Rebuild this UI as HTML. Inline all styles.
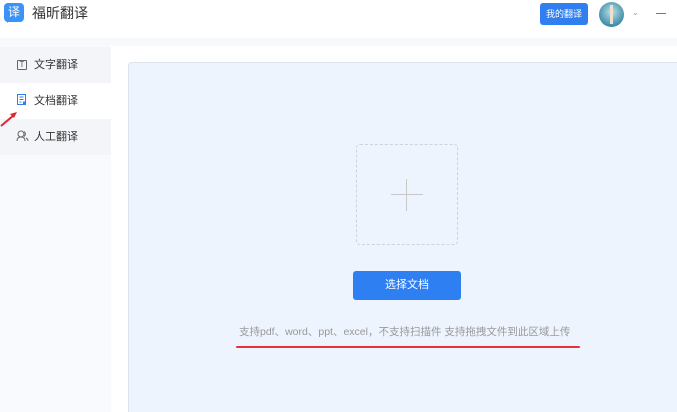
<!DOCTYPE html>
<html><head><meta charset="utf-8"><style>
*{margin:0;padding:0;box-sizing:border-box}
html,body{width:677px;height:412px;overflow:hidden}
body{background:#fff;font-family:"Liberation Sans","Noto Sans CJK SC",sans-serif;position:relative}
.hdr{position:absolute;left:0;top:0;width:677px;height:38px;background:#fff}
.strip{position:absolute;left:0;top:38px;width:677px;height:8px;background:#f7f9fc}
.side{position:absolute;left:0;top:46px;width:111px;height:366px;background:#f8fafe}
.item{position:absolute;left:0;width:111px;height:36px;font-size:11px;color:#333;line-height:36px;padding-left:34px}
.card{position:absolute;left:128px;top:62px;width:549px;height:350px;background:#edf4fe;border:1px solid #dde3ea;border-right:none;border-bottom:none;border-radius:4px 0 0 0}
</style></head><body>
<div class="hdr">
 <div style="position:absolute;left:4px;top:3px;width:20px;height:19px;background:#3b93f7;border-radius:4px;color:#fff;font-size:12px;line-height:19px;text-align:center">译</div>
 <div style="position:absolute;left:7px;top:19px;width:0;height:0;border-left:4px solid #3b93f7;border-bottom:4px solid transparent"></div>
 <div style="position:absolute;left:32px;top:3px;font-size:14px;color:#333;line-height:20px">福昕翻译</div>
 <div style="position:absolute;left:540px;top:3px;width:48px;height:22px;background:#2f7ff0;border-radius:3px;color:#fff;font-size:9px;line-height:22px;text-align:center">我的翻译</div>
 <div style="position:absolute;left:599px;top:2px;width:25px;height:25px;border-radius:50%;background:radial-gradient(circle at 50% 40%,#bfe0e8,#3f8ea8 70%,#2a6a80)"></div>
 <div style="position:absolute;left:610px;top:5px;width:3px;height:19px;background:#e8e2cf"></div>
 <div style="position:absolute;left:632px;top:8px;font-size:8px;color:#999">⌄</div>
 <div style="position:absolute;left:656px;top:13px;width:10px;height:1px;background:#777"></div>
</div>
<div class="strip"></div>
<div class="side">
 <div class="item" style="top:1px;background:#f4f5f8">文字翻译</div>
 <div class="item" style="top:37px;background:#fff">文档翻译</div>
 <div class="item" style="top:73px;background:#f4f5f8">人工翻译</div>
</div>
<div style="position:absolute;left:17px;top:60px;width:10px;height:10px;border:1px solid #666;border-radius:1px;font-size:8px;line-height:8px;text-align:center;color:#555">T</div>
<svg style="position:absolute;left:16px;top:94px" width="12" height="12" viewBox="0 0 12 12"><rect x="1.5" y="0.5" width="8" height="10" fill="none" stroke="#2f7ff0"/><path d="M3.5 3h4M3.5 5.5h4M3.5 8h2" stroke="#2f7ff0"/><rect x="7" y="7.5" width="3" height="3" fill="#2f7ff0"/></svg>
<svg style="position:absolute;left:16px;top:130px" width="13" height="12" viewBox="0 0 13 12"><circle cx="5" cy="4" r="3" fill="none" stroke="#666"/><path d="M1 11c0-3 2-4 4-4s4 1 4 4" fill="none" stroke="#666"/><path d="M8 1.5a3 3 0 0 1 0 5M10 8c1.5 .7 2 2 2 3" fill="none" stroke="#666"/></svg>
<svg style="position:absolute;left:0;top:110px" width="20" height="18"><path d="M1 16L14 5" stroke="#e0262b" stroke-width="2"/><path d="M17 2l-7 2 4 4z" fill="#e0262b"/></svg>
<div class="card"></div>
<div style="position:absolute;left:356px;top:144px;width:102px;height:101px;border:1px dashed #cfd3d9;border-radius:4px"></div>
<div style="position:absolute;left:391px;top:194px;width:32px;height:1px;background:#c8c8c8"></div>
<div style="position:absolute;left:406px;top:179px;width:1px;height:32px;background:#c8c8c8"></div>
<div style="position:absolute;left:353px;top:271px;width:108px;height:29px;background:#2d7ff2;border-radius:3px;color:#fff;font-size:11px;line-height:29px;text-align:center">选择文档</div>
<div style="position:absolute;left:239px;top:325px;font-size:10.5px;color:#999;white-space:nowrap;line-height:14px">支持pdf、word、ppt、excel，不支持扫描件 支持拖拽文件到此区域上传</div>
<div style="position:absolute;left:236px;top:346px;width:344px;height:2px;background:#e8303b;border-radius:1px"></div>
</body></html>
